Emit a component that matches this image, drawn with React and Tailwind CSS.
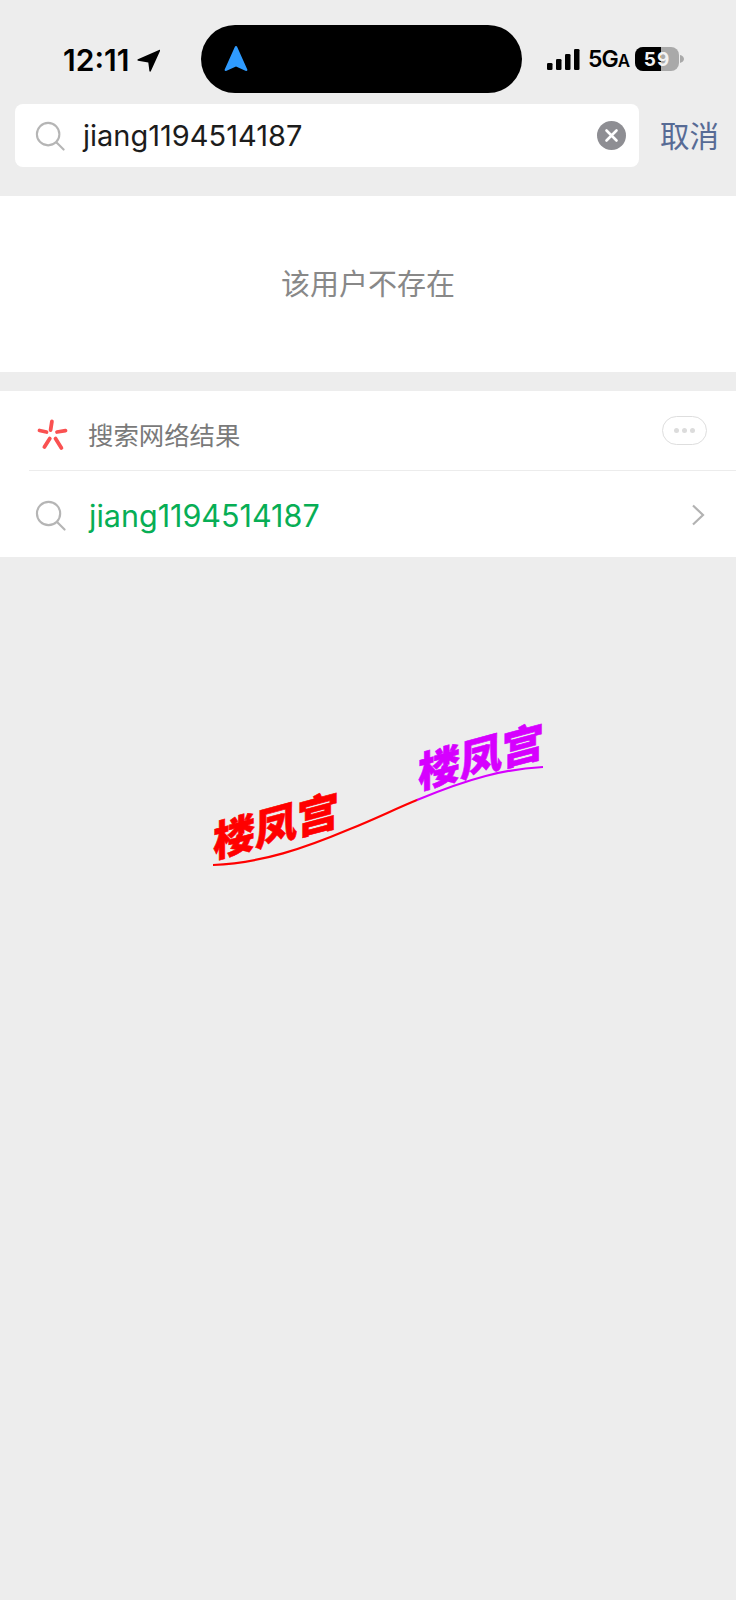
const SANS = '[font-family:Inter,"Noto_Sans_CJK_SC",sans-serif]';

function SearchIcon({ className }) {
  return (
    <svg className={className} viewBox="0 0 32 32" fill="none" stroke="#b5b5b5" strokeWidth="2.2" strokeLinecap="round">
      <circle cx="14" cy="14" r="12" />
      <path d="M23 23l7.5 7.5" />
    </svg>
  );
}

function SignalBars() {
  return (
    <svg width="34" height="21" viewBox="0 0 34 21" fill="#000">
      <rect x="0" y="14" width="5.5" height="7" rx="1.3" />
      <rect x="9" y="10" width="5.5" height="11" rx="1.3" />
      <rect x="18" y="5" width="5.5" height="16" rx="1.3" />
      <rect x="27" y="0" width="5.5" height="21" rx="1.3" />
    </svg>
  );
}

function Battery() {
  return (
    <div className="flex items-center">
      <div className="relative flex h-6 w-11 items-center justify-center overflow-hidden rounded-[8px] bg-[#a9a9a9]">
        <div className="absolute inset-y-0 left-0 w-[26px] bg-black" />
        <span className="relative text-[19px] leading-none font-bold tracking-[1px] text-[#f2f2f2]">59</span>
      </div>
      <svg className="ml-px" width="4" height="8" viewBox="0 0 4 8" fill="#a9a9a9">
        <path d="M0 0c2.4.6 4 2.2 4 4s-1.6 3.4-4 4z" />
      </svg>
    </div>
  );
}

function StatusBar() {
  return (
    <div className="flex h-[104px] items-start">
      <div className="mt-[43px] flex w-[201px] items-center pl-[63px]">
        <span className="text-[30px] leading-[34px] font-semibold text-black">12:11</span>
        <svg className="ml-[8px]" width="23" height="23" viewBox="0 0 23 23" fill="#000">
          <path d="M22.6.8c.4-.3.9.2.7.6L13.8 22.2c-.3.7-1.3.6-1.4-.2l-1.1-8.6-10.2-1.7c-.8-.1-.9-1.1-.2-1.4z" />
        </svg>
      </div>
      <div className="mt-[25px] flex h-[68px] w-[321px] items-center rounded-[34px] bg-black pl-[23px]">
        <svg width="24" height="26" viewBox="0 0 24 26" fill="#2f9bff">
          <path d="M12 0c.5 0 .9.3 1.1.8l10.2 22.8c.4.9-.4 1.6-1.3 1.3L12 20.6 2 24.9c-.9.3-1.7-.4-1.3-1.3L10.9.8c.2-.5.6-.8 1.1-.8z" />
        </svg>
      </div>
      <div className="mt-[47px] ml-[25px] flex items-center">
        <SignalBars />
        <span className="ml-[7px] text-[23px] leading-none font-semibold tracking-[-1px] text-black">
          5G<span className="text-[17px]">A</span>
        </span>
        <div className="ml-[6px]">
          <Battery />
        </div>
      </div>
    </div>
  );
}

function SearchBar() {
  return (
    <div className="flex h-[92px] items-start pl-[15px]">
      <div className="flex h-[63px] w-[624px] items-center rounded-[8px] bg-white pr-[13px] pl-[20px]">
        <SearchIcon className="h-[30px] w-[30px]" />
        <span className="ml-[18px] flex-1 text-[29px] leading-none text-[#1c1c1c]">jiang1194514187</span>
        <svg width="29" height="29" viewBox="0 0 29 29">
          <circle cx="14.5" cy="14.5" r="14.5" fill="#8e8e93" />
          <path d="M9.5 9.5l10 10M19.5 9.5l-10 10" stroke="#fff" strokeWidth="2.6" strokeLinecap="round" />
        </svg>
      </div>
      <span className="mt-[14px] ml-[21px] text-[29.5px] leading-[36px] text-[#576b95]">取消</span>
    </div>
  );
}

function WebResults() {
  return (
    <div className="mt-[19px] bg-white">
      <div className="ml-[29px] flex h-[80px] items-center border-b border-[#ececec] pt-[10px] pr-[29px]">
        <svg className="-mt-[2px] ml-[8px]" width="32" height="32" viewBox="0 0 32 32" fill="none" stroke="#fa5151" strokeWidth="3.8" strokeLinecap="round">
          <path d="M14.9 2.5L13.6 11" />
          <path d="M2.5 11.5L9.5 13" />
          <path d="M28.5 11.6L20 13" />
          <path d="M12.8 19.5L7.4 28" />
          <path d="M18.5 19.5L24.4 29" />
        </svg>
        <span className="ml-[19px] flex-1 text-[25.4px] leading-none text-[#7a7a7a]">搜索网络结果</span>
        <div className="-mt-[10px] flex h-[29px] w-[45px] items-center justify-center gap-[3px] rounded-full border-[1.5px] border-[#dedede]">
          <span className="h-[5px] w-[5px] rounded-full bg-[#dcdcdc]" />
          <span className="h-[5px] w-[5px] rounded-full bg-[#dcdcdc]" />
          <span className="h-[5px] w-[5px] rounded-full bg-[#dcdcdc]" />
        </div>
      </div>
      <div className="flex h-[86px] items-center pt-[2px] pr-[31px] pl-[35px]">
        <SearchIcon className="h-[31px] w-[31px]" />
        <span className="mt-[2px] ml-[23px] flex-1 text-[30.5px] leading-none text-[#07ae55]">jiang1194514187</span>
        <svg width="14" height="22" viewBox="0 0 14 22" fill="none" stroke="#b2b2b2" strokeWidth="2.2">
          <path d="M2 1.5L12 11 2 20.5" />
        </svg>
      </div>
    </div>
  );
}

// curved watermark across the empty area
function Watermark() {
  return (
    <svg className="absolute top-0 left-0" width="736" height="1600" viewBox="0 0 736 1600">
      <defs>
        <linearGradient id="wm" gradientUnits="userSpaceOnUse" x1="416" y1="0" x2="418" y2="0">
          <stop offset="0" stopColor="#ff0000" />
          <stop offset="1" stopColor="#d600ff" />
        </linearGradient>
      </defs>
      <path
        d="M213 865C262 863 305 848 350 829C375 819 395 809 417 800C470 778 505 769 543 767"
        fill="none"
        stroke="url(#wm)"
        strokeWidth="2.2"
      />
      <g fontFamily='"Noto Sans CJK SC", sans-serif' fontWeight="900" fontSize="42" strokeWidth="0.6">
        <text transform="translate(213 858) skewY(-15)" fill="#ff0000" stroke="#ff0000" textLength="126" lengthAdjust="spacingAndGlyphs">楼凤宫</text>
        <text transform="translate(418 789) skewY(-15)" fill="#d600ff" stroke="#d600ff" textLength="126" lengthAdjust="spacingAndGlyphs">楼凤宫</text>
      </g>
    </svg>
  );
}

export default function App() {
  return (
    <div className={`relative h-[1600px] w-[736px] overflow-hidden bg-[#ededed] ${SANS}`}>
      <StatusBar />
      <SearchBar />
      <div className="flex h-[176px] items-center justify-center bg-white text-[29px] leading-none text-[#888888]">
        该用户不存在
      </div>
      <WebResults />
      <Watermark />
    </div>
  );
}
